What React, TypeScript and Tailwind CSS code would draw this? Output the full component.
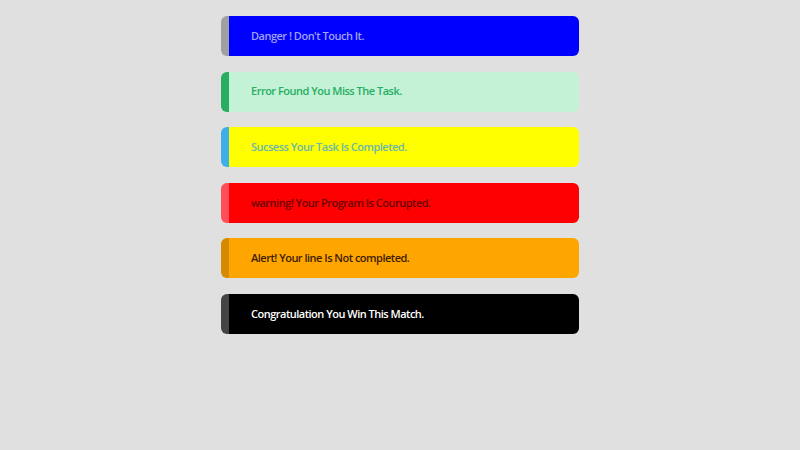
const alerts = [
  { text: "Danger ! Don't Touch It.", box: 'bg-[#0000ff] border-[#a0a0a0] text-[#a0a0f5]' },
  { text: 'Error Found You Miss The Task.', box: 'bg-[#c3f2d7] border-[#27ae60] text-[#27ae60]' },
  { text: 'Sucsess Your Task Is Completed.', box: 'bg-[#ffff00] border-[#3daee9] text-[#6cb8a8]' },
  { text: 'warning! Your Program Is Courupted.', box: 'bg-[#ff0000] border-[#ff4d5a] text-[#6a0000]' },
  { text: 'Alert! Your line Is Not completed.', box: 'bg-[#ffa500] border-[#d68a00] text-[#3d2000]' },
  { text: 'Congratulation You Win This Match.', box: 'bg-black border-[#444444] text-white' },
];

export default function App() {
  return (
    <div className="min-h-screen bg-[#e0e0e0] pt-4" style={{ fontFamily: '"Open Sans", sans-serif' }}>
      <div className="mx-auto flex w-[358px] flex-col gap-[15.6px]">
        {alerts.map((a) => (
          <div
            key={a.text}
            className={`flex h-10 items-center rounded-md border-l-8 pl-[22px] text-[11px] font-semibold tracking-[-0.5px] ${a.box}`}
          >
            {a.text}
          </div>
        ))}
      </div>
    </div>
  );
}
